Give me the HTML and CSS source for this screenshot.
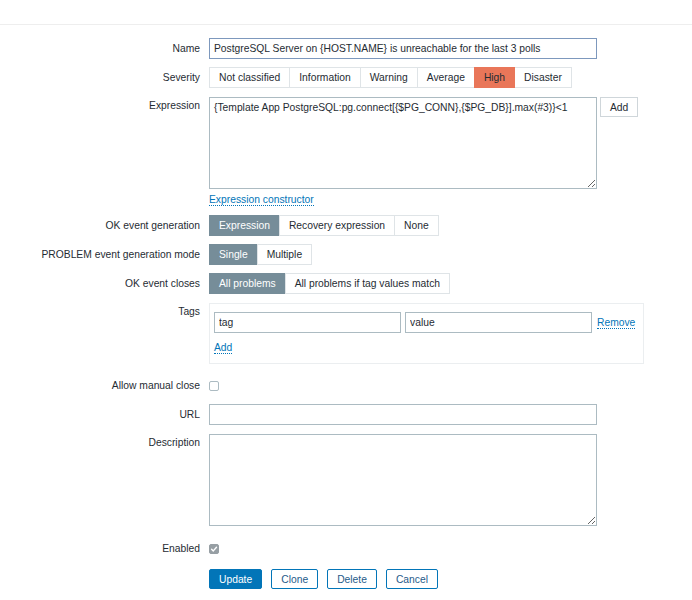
FILE: index.html
```html
<!DOCTYPE html>
<html lang="en">
<head>
<meta charset="utf-8">
<title>Trigger</title>
<link rel="stylesheet" href="styles.css">
</head>
<body>
<div class="topbar"></div>
<form class="form">
  <div class="row">
    <label class="lbl">Name</label>
    <div class="ctl"><input class="text focused w-wide" type="text" value="PostgreSQL Server on {HOST.NAME} is unreachable for the last 3 polls"></div>
  </div>
  <div class="row row-sev">
    <label class="lbl">Severity</label>
    <div class="ctl">
      <div class="seg">
        <span class="opt">Not classified</span><span class="opt">Information</span><span class="opt">Warning</span><span class="opt">Average</span><span class="opt high">High</span><span class="opt">Disaster</span>
      </div>
    </div>
  </div>
  <div class="row row-top row-expr">
    <label class="lbl lbl-top">Expression</label>
    <div class="ctl">
      <div class="expr">
        <textarea class="area w-wide expr-area">{Template App PostgreSQL:pg.connect[{$PG_CONN},{$PG_DB}].max(#3)}&lt;1</textarea>
        <button type="button" class="btn-grey">Add</button>
      </div>
      <div class="link-line"><a class="link">Expression constructor</a></div>
    </div>
  </div>
  <div class="row">
    <label class="lbl">OK event generation</label>
    <div class="ctl">
      <div class="seg">
        <span class="opt on">Expression</span><span class="opt">Recovery expression</span><span class="opt">None</span>
      </div>
    </div>
  </div>
  <div class="row">
    <label class="lbl">PROBLEM event generation mode</label>
    <div class="ctl">
      <div class="seg">
        <span class="opt on">Single</span><span class="opt">Multiple</span>
      </div>
    </div>
  </div>
  <div class="row row-closes">
    <label class="lbl">OK event closes</label>
    <div class="ctl">
      <div class="seg">
        <span class="opt on">All problems</span><span class="opt">All problems if tag values match</span>
      </div>
    </div>
  </div>
  <div class="row row-top row-tags">
    <label class="lbl lbl-top">Tags</label>
    <div class="ctl">
      <div class="tags">
        <div class="tag-row">
          <input class="text w-tag" type="text" placeholder="tag">
          <input class="text w-tag" type="text" placeholder="value">
          <a class="link">Remove</a>
        </div>
        <div class="tag-add"><a class="link">Add</a></div>
      </div>
    </div>
  </div>
  <div class="row row-check">
    <label class="lbl">Allow manual close</label>
    <div class="ctl"><span class="check"></span></div>
  </div>
  <div class="row row-url">
    <label class="lbl">URL</label>
    <div class="ctl"><input class="text w-wide" type="text"></div>
  </div>
  <div class="row row-top">
    <label class="lbl lbl-top">Description</label>
    <div class="ctl"><textarea class="area w-wide desc-area"></textarea></div>
  </div>
  <div class="row row-check row-enabled">
    <label class="lbl">Enabled</label>
    <div class="ctl">
      <span class="check checked">
        <svg viewBox="0 0 10 10" width="10" height="10"><path d="M2.6 5.2 L4.3 6.9 L7.5 3.2" fill="none" stroke="#fff" stroke-width="1.4" stroke-linecap="round" stroke-linejoin="round"/></svg>
      </span>
    </div>
  </div>
  <div class="row row-buttons">
    <div class="lbl"></div>
    <div class="ctl buttons">
      <button type="button" class="btn-main">Update</button>
      <button type="button" class="btn-alt">Clone</button>
      <button type="button" class="btn-alt">Delete</button>
      <button type="button" class="btn-alt">Cancel</button>
    </div>
  </div>
</form>
</body>
</html>
```

FILE: styles.css
```css
* {
  box-sizing: border-box;
}

body {
  margin: 0;
  background: #fff;
  color: #1f2c33;
  font-family: "Liberation Sans", Arial, sans-serif;
  font-size: 10.3px;
}

.topbar {
  height: 25px;
  border-bottom: 1px solid #eeeeee;
}

.form {
  padding-top: 13px;
}

/* form rows: label column + control column */
.row {
  display: flex;
  align-items: center;
  margin-bottom: 8px;
}

.row-top {
  align-items: flex-start;
}

.row-sev,
.row-url,
.row-closes,
.row-expr {
  margin-bottom: 9px;
}

.row-tags {
  margin-bottom: 11px;
}

.lbl {
  flex: 0 0 209px;
  text-align: right;
  padding-right: 9px;
  white-space: nowrap;
}

.lbl-top {
  padding-top: 3px;
}

.ctl {
  flex: 0 0 auto;
}

/* text inputs */
.text,
.area {
  font: inherit;
  color: #1f2c33;
  border: 1px solid #acbbc2;
  background: #fff;
  padding: 0 4px;
  margin: 0;
  outline: none;
  border-radius: 0;
}

.text {
  height: 21px;
}

.text::placeholder {
  color: #1f2c33;
}

.focused {
  border-color: #7d98bd;
}

.w-wide {
  width: 388px;
}

.area {
  display: block;
  padding: 4px;
  resize: vertical;
}

.expr {
  display: flex;
  align-items: flex-start;
  gap: 3px;
}

.expr-area,
.desc-area {
  height: 92px;
}

.btn-grey {
  font: inherit;
  color: #1f2c33;
  background: #fff;
  border: 1px solid #cfd6da;
  height: 20px;
  padding: 0 9px;
  margin: 0;
}

.link-line {
  margin-top: 4px;
  line-height: 13px;
}

.link {
  color: #0275b8;
  border-bottom: 1px dotted #0275b8;
  cursor: pointer;
}

/* segmented radio lists */
.seg {
  display: flex;
  height: 21px;
}

.opt {
  display: flex;
  align-items: center;
  padding: 0 9px;
  border: 1px solid #dfe4e7;
  margin-left: -1px;
  background: #fff;
  white-space: nowrap;
}

.opt:first-child {
  margin-left: 0;
}

.opt.on {
  background: #768d99;
  border-color: #768d99;
  color: #fff;
}

.opt.high {
  background: #e97659;
  border-color: #e97659;
  position: relative;
}

/* tags table */
.tags {
  width: 435px;
  border: 1px solid #ebeef0;
  padding: 8px 4px 9px;
}

.tag-row {
  display: flex;
  align-items: center;
  gap: 4px;
}

.w-tag {
  width: 187px;
}

.tag-row .link {
  margin-left: 1px;
}

.tag-add {
  margin-top: 8px;
  line-height: 13px;
}

/* checkboxes */
.row-check {
  height: 21px;
}

.row-enabled {
  margin-top: 12px;
  margin-bottom: 10px;
}

.check {
  display: block;
  width: 10px;
  height: 10px;
  border: 1px solid #acbbc2;
  border-radius: 2px;
  background: #fff;
}

.check.checked {
  border-color: #979fa4;
  background: #979fa4;
}

.check svg {
  display: block;
  margin: -1px;
}

/* form buttons */
.buttons {
  display: flex;
  gap: 9px;
}

.btn-main,
.btn-alt {
  font: inherit;
  height: 20px;
  padding: 0 9px;
  margin: 0;
  border-radius: 2px;
}

.btn-main {
  background: #0275b8;
  border: 1px solid #0275b8;
  color: #fff;
}

.btn-alt {
  background: #fff;
  border: 1px solid #0275b8;
  color: #1f5b8a;
}
```
